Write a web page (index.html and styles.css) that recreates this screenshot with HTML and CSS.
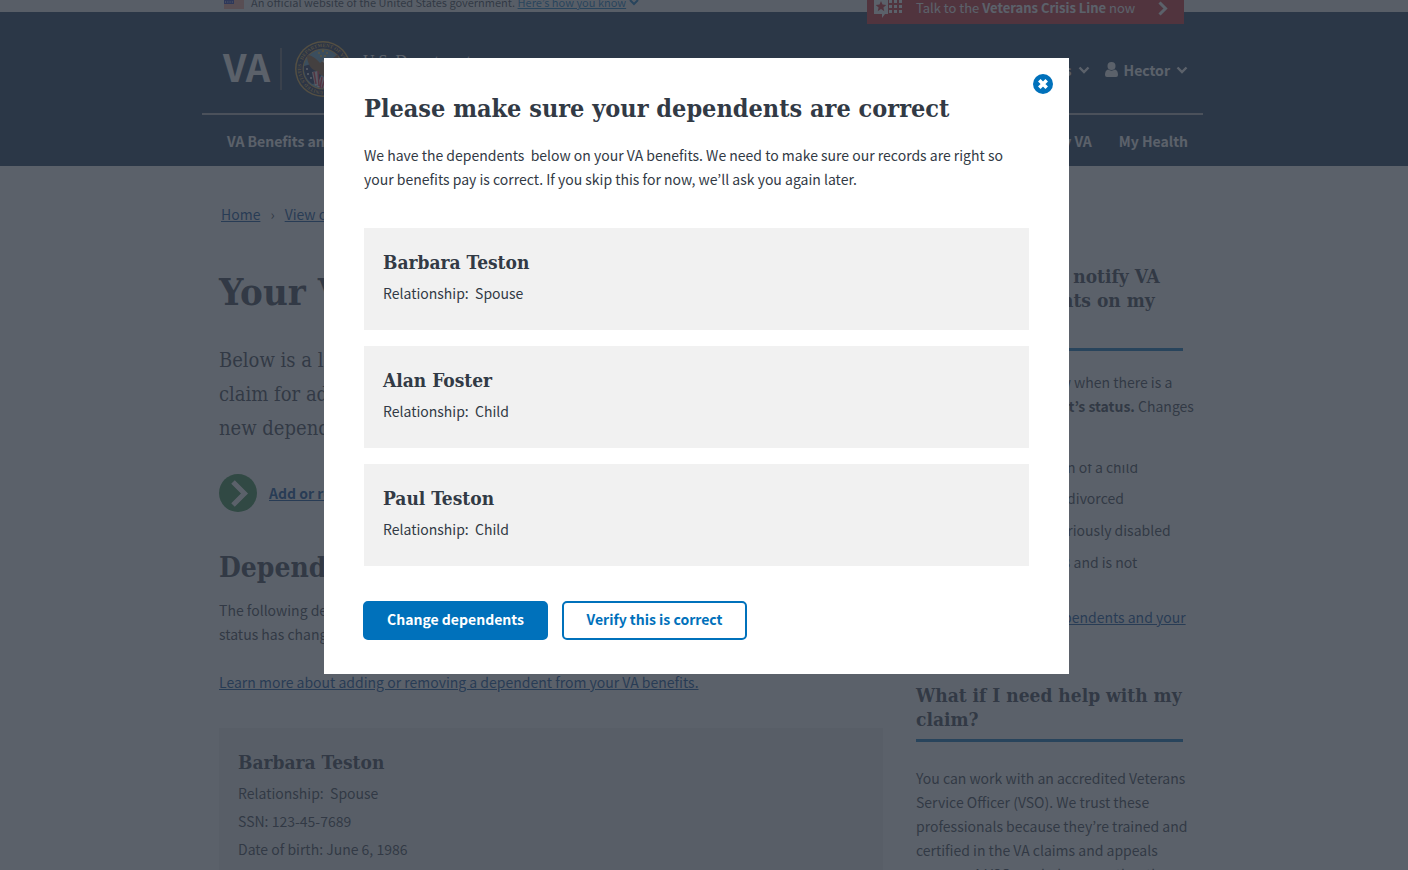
FILE: index.html
```html
<!DOCTYPE html>
<html lang="en">
<head>
<meta charset="utf-8">
<title>Your VA dependents</title>
<link rel="stylesheet" href="styles.css">
</head>
<body>
<div class="page">
  <div class="banner">
    <div class="wrap banner-row">
      <svg class="flag" width="20" height="14" viewBox="0 0 20 14" aria-hidden="true">
        <rect width="20" height="14" fill="#fff"/>
        <path d="M0 1h20M0 3h20M0 5h20M0 7h20M0 9h20M0 11h20M0 13h20" stroke="#db3e1f" stroke-width="1"/>
        <rect width="10" height="9" fill="#1e33b1"/>
        <path d="M1 2h8M1 4.500h8M1 7h8" stroke="#fff" stroke-width="1" stroke-dasharray="1 1.300"/>
      </svg>
      <span class="banner-text">An official website of the United States government. <a href="#">Here’s how you know</a></span>
      <svg class="banner-chevron" width="10" height="7" viewBox="0 0 10 7" aria-hidden="true"><path d="M1 1l4 4 4-4" fill="none" stroke="#0071bb" stroke-width="2"/></svg>
    </div>
  </div>
  <header class="header">
    <div class="wrap header-inner">
      <a class="crisis" href="#">
        <svg width="30" height="24" viewBox="0 -3 30 24" aria-hidden="true">
          <path d="M1 -1h14v16h-3l-3 4v-4H1z" fill="#fff"/>
          <path d="M8 2l1.500 3.600 3.800.3-2.900 2.500.9 3.800L8 10.100l-3.300 2.100.9-3.800-2.900-2.500 3.800-.3z" fill="#cd2026"/>
          <g fill="#fff"><rect x="16" y="1" width="3" height="3"/><rect x="21" y="1" width="3" height="3"/><rect x="26" y="1" width="3" height="3"/><rect x="16" y="6" width="3" height="3"/><rect x="21" y="6" width="3" height="3"/><rect x="26" y="6" width="3" height="3"/><rect x="16" y="11" width="3" height="3"/><rect x="21" y="11" width="3" height="3"/><rect x="26" y="11" width="3" height="3"/></g>
        </svg>
        <span class="crisis-text">Talk to the <b>Veterans Crisis Line</b> now</span>
        <svg width="10" height="15" viewBox="0 0 10 15" aria-hidden="true"><path d="M1.500 1.500l6 6-6 6" fill="none" stroke="#fff" stroke-width="3"/></svg>
      </a>
      <div class="brand-row">
        <a class="brand" href="#">
          <span class="va">VA</span>
          <span class="rule"></span>
          <svg class="seal" width="56" height="56" viewBox="0 0 56 56" aria-hidden="true">
            <defs><path id="ring" d="M28 50a22 22 0 1 1 .1 0"/></defs>
            <circle cx="28" cy="28" r="28" fill="#dba53a"/>
            <circle cx="28" cy="28" r="26.500" fill="#14264a"/>
            <circle cx="28" cy="28" r="20.500" fill="#dba53a"/>
            <circle cx="28" cy="28" r="19.500" fill="#5f9fc4"/>
            <text class="seal-text"><textPath href="#ring">UNITED STATES · DEPARTMENT OF VETERANS AFFAIRS ·</textPath></text>
            <g fill="#f4c430"><circle cx="28" cy="10" r="1.200"/><circle cx="24" cy="12" r="1"/><circle cx="32" cy="12" r="1"/><circle cx="26" cy="15" r="1"/><circle cx="30" cy="15" r="1"/></g>
            <path d="M9 25l11-3 7 8-3 12-7 1a20 20 0 0 1-8-18z" fill="#18264f"/>
            <path d="M12 14c4 0 9 3 13 8l4-3 4 2 10-8c1 8-3 15-9 18l-4 5-6-3-3-3c-6-2-9-9-9-16z" fill="#8a5a30"/>
            <path d="M17 31l6-1 2 13-5 2zM26 35l6 3-2 9-8-1z" fill="#e9d9df"/>
            <path d="M19 31l2 12M23 30l1 15M27 36l-2 11M30 38l-3 9" stroke="#d5223a" stroke-width="1.500"/>
            <path d="M27 20l4-2 3 3-4 2z" fill="#fff"/>
            <g fill="#fff"><circle cx="12" cy="28" r="1"/><circle cx="13" cy="33" r="1"/><circle cx="16" cy="37" r="1"/></g>
          </svg>
          <span class="dept">U.S. Department</span>
        </a>
        <div class="account">
          <button type="button" class="menu">Contact us
            <svg width="12" height="8" viewBox="0 0 12 8" aria-hidden="true"><path d="M1.500 1.500L6 6l4.500-4.500" fill="none" stroke="#fff" stroke-width="2.400"/></svg>
          </button>
          <button type="button" class="menu user">
            <svg width="13" height="15" viewBox="0 0 13 15" aria-hidden="true"><circle cx="6.500" cy="4" r="4" fill="#fff"/><path d="M3 7.500C1 8 0 10 0 13q0 2 2 2h9q2 0 2-2c0-3-1-5-3-5.500-2 1.500-5 1.500-7 0z" fill="#fff"/></svg>
            Hector
            <svg width="12" height="8" viewBox="0 0 12 8" aria-hidden="true"><path d="M1.500 1.500L6 6l4.500-4.500" fill="none" stroke="#fff" stroke-width="2.400"/></svg>
          </button>
        </div>
      </div>
      <nav class="nav">
        <a href="#">VA Benefits and Health Care</a>
        <a class="nav-right" href="#">My VA</a>
        <a href="#">My Health</a>
      </nav>
    </div>
  </header>

  <div class="wrap content">
    <nav class="crumbs"><a href="#">Home</a><span>›</span><a href="#">View dependents</a></nav>
    <div class="columns">
      <main class="main">
        <h1>Your VA Dependents</h1>
        <p class="intro">Below is a list of dependents we have on file<br>claim for additional benefits. You can add a<br>new dependent or remove one at any time.</p>
        <a class="action" href="#">
          <svg width="38" height="38" viewBox="0 0 38 38" aria-hidden="true"><circle cx="19" cy="19" r="19" fill="#2e8540"/><path d="M14 8L25.500 19.500l-11.500 11.500" fill="none" stroke="#fff" stroke-width="5"/></svg>
          <span>Add or remove a dependent</span>
        </a>
        <h2>Dependents on your award</h2>
        <p class="text">The following dependents are on your benefits. If their<br>status has changed, please let us know.</p>
        <p class="text more"><a href="#">Learn more about adding or removing a dependent from your VA benefits.</a></p>
        <section class="card record">
          <h3>Barbara Teston</h3>
          <p>Relationship: &nbsp;Spouse</p>
          <p>SSN: 123-45-7689</p>
          <p>Date of birth: June 6, 1986</p>
        </section>
      </main>
      <aside class="side">
        <h3 class="first">What if I do not notify VA<br>of any dependents on my<br>claim?</h3>
        <p class="text">You need to let VA know when there is a<br>change for a <b>dependent’s status.</b> Changes<br>include:</p>
        <ul>
          <li class="cut"><span>Birth or an adoption of a child</span></li>
          <li>Getting married or divorced</li>
          <li>A child becomes seriously disabled</li>
          <li>A child turns age 18 and is not</li>
        </ul>
        <p class="text side-link"><a href="#">Learn about adding dependents and your<br>benefits</a></p>
        <h3 class="second">What if I need help with my claim?</h3>
        <p class="text">You can work with an accredited Veterans<br>Service Officer (VSO). We trust these<br>professionals because they’re trained and<br>certified in the VA claims and appeals<br>process. A VSO can help you gather the</p>
      </aside>
    </div>
  </div>
</div>

<div class="overlay">
  <div class="dialog" role="dialog" aria-modal="true" aria-labelledby="dialog-title">
    <button type="button" class="close" aria-label="Close">
      <svg width="20" height="20" viewBox="0 0 20 20" aria-hidden="true"><circle cx="10" cy="10" r="10" fill="#0071bb"/><path d="M6.300 6.300l7.400 7.400M13.700 6.300l-7.400 7.400" stroke="#fff" stroke-width="3.600"/></svg>
    </button>
    <h2 id="dialog-title">Please make sure your dependents are correct</h2>
    <p class="lead">We have the dependents &nbsp;below on your VA benefits. We need to make sure our records are right so<br>your benefits pay is correct. If you skip this for now, we’ll ask you again later.</p>
    <div class="list">
      <section class="card"><h3>Barbara Teston</h3><p>Relationship: &nbsp;Spouse</p></section>
      <section class="card"><h3>Alan Foster</h3><p>Relationship: &nbsp;Child</p></section>
      <section class="card"><h3>Paul Teston</h3><p>Relationship: &nbsp;Child</p></section>
    </div>
    <div class="buttons">
      <button type="button" class="btn primary">Change dependents</button>
      <button type="button" class="btn">Verify this is correct</button>
    </div>
  </div>
</div>
</body>
</html>
```
FILE: styles.css
```css
* { box-sizing: border-box; }
body {
  margin: 0;
  color: #323a45;
  background: #fff;
  font: 14px/24px "Noto Sans CJK JP", "Open Sans", sans-serif;
}
h1, h2, h3, p, ul { margin: 0; padding: 0; }
h1, h2, h3, .intro { font-family: "DejaVu Serif Condensed", "DejaVu Serif", serif; }
a { color: #004795; }
button { font: inherit; cursor: pointer; }
.page { height: 100vh; overflow: hidden; }
.wrap { max-width: 1004px; margin: 0 auto; padding-right: 3px; }

.banner { height: 12px; background: #f1f1f1; overflow: hidden; }
.banner-row { display: flex; align-items: flex-end; height: 9px; padding-left: 22px; }
.flag { flex: none; margin-right: 7px; }
.banner-text { font-size: 11px; line-height: 14px; white-space: nowrap; }
.banner-text a { color: #0071bb; }
.banner-chevron { margin: 0 0 3px 3px; }

.header { background: #112e51; color: #fff; height: 154px; }
.header a { color: #fff; text-decoration: none; }
.header-inner { position: relative; }
.crisis {
  position: absolute; top: -20px; right: 22px;
  display: flex; align-items: center;
  width: 317px; height: 32px; padding: 0 16px 0 6px;
  background: #cd2026;
}
.crisis-text { flex: 1; padding: 0 0 1px 13px; font-size: 13px; }
.brand-row { display: flex; justify-content: space-between; height: 103px; padding: 0 15px 0 21px; border-bottom: 2px solid #aeb0b5; }
.brand { display: flex; align-items: center; height: 114px; }
.va { font-size: 38px; font-weight: 700; line-height: 44px; width: 57px; padding-bottom: 6px; }
.rule { width: 2px; height: 42px; background: #5b616b; margin-right: 13px; }
.seal { flex: none; }
.seal-text { font: 700 5px "Liberation Serif", serif; fill: #dba53a; }
.dept { align-self: flex-start; margin: 37px 0 0 12px; font: 16px/24px "Liberation Serif", serif; }
.account { display: flex; align-items: center; gap: 15px; height: 115px; }
.menu { display: flex; align-items: center; gap: 6px; padding: 0; border: 0; background: none; color: #fff; font-weight: 700; }
.nav { display: flex; gap: 27px; padding: 14px 15px 0 25px; font-weight: 700; }
.nav-right { margin-left: auto; }

.crumbs { display: flex; gap: 10px; padding: 36px 0 0 19px; }
.columns { display: grid; grid-template-columns: 664px 1fr; gap: 33px; padding-left: 17px; }
h1 { margin-top: 39px; font-size: 38px; line-height: 54px; }
.intro { margin-top: 24px; font-size: 20px; line-height: 34px; }
.action { display: flex; align-items: center; gap: 12px; margin-top: 29px; font-weight: 700; }
.main h2 { margin-top: 37px; font-size: 28px; line-height: 38px; }
.main .text { margin-top: 11px; }
.main .more { margin-top: 24px; }
.card { background: #f1f1f1; padding: 20px 19px; height: 102px; }
.card h3 { font-size: 19px; line-height: 29px; }
.card p { line-height: 28px; margin-top: 2px; }
.record { margin-top: 34px; height: 180px; }
.record p + p { margin-top: 0; }

.side { padding-top: 38px; white-space: nowrap; }
.side h3 { font-size: 19px; line-height: 24px; width: 267px; border-bottom: 3px solid #0071bb; }
.side .first { height: 87px; }
.side h3 + .text { margin-top: 19px; }
.side ul { list-style: none; margin-top: 22px; padding-left: 28px; line-height: 32px; }
.side .cut { display: flex; align-items: flex-end; height: 10px; margin-bottom: 8px; overflow: hidden; line-height: 14px; }
.side-link { margin-top: 27px; }
.side .second { margin-top: 30px; padding-bottom: 8px; white-space: normal; }
.side .second + .text { margin-top: 24px; }

.overlay { position: fixed; inset: 0; padding: 58px 15px 0 0; background: rgba(50, 58, 69, 0.8); }
.dialog { position: relative; max-width: 745px; margin: 0 auto; padding: 31px 40px 34px; background: #fff; }
.close { position: absolute; top: 16px; right: 16px; display: flex; padding: 0; border: 0; background: none; }
.dialog h2 { font-size: 25px; line-height: 40px; white-space: nowrap; }
.lead { margin-top: 14px; white-space: nowrap; }
.list { display: grid; gap: 16px; margin-top: 37px; }
.buttons { display: flex; gap: 14px; margin: 35px 0 0 -1px; }
.btn { width: 185px; height: 39px; padding: 0 0 3px; border: 2px solid #0071bb; border-radius: 5px; background: #fff; color: #0071bb; font-weight: 700; }
.primary { background: #0071bb; color: #fff; }
```
